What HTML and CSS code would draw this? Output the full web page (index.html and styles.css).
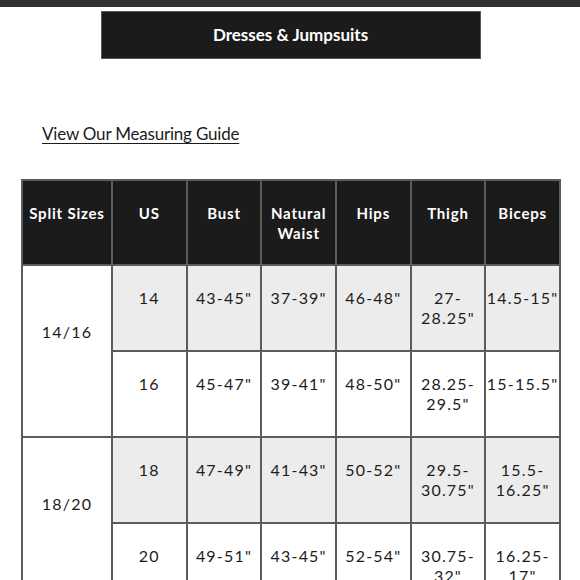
FILE: index.html
```html
<!DOCTYPE html>
<html>
<head>
<meta charset="utf-8">
<link rel="stylesheet" href="styles.css">
</head>
<body>
<div class="topbar"></div>
<div class="page">
  <div class="title">Dresses &amp; Jumpsuits</div>
  <a class="guide" href="#">View Our Measuring Guide</a>
  <table class="sizes">
    <colgroup>
      <col class="c-first"><col><col><col><col><col><col>
    </colgroup>
    <thead>
      <tr>
        <th>Split Sizes</th><th>US</th><th>Bust</th><th>Natural<br>Waist</th><th>Hips</th><th>Thigh</th><th>Biceps</th>
      </tr>
    </thead>
    <tbody>
      <tr class="grey">
        <td rowspan="2" class="split">14/16</td>
        <td>14</td><td>43-45"</td><td>37-39"</td><td>46-48"</td><td>27-<br>28.25"</td><td>14.5-15"</td>
      </tr>
      <tr>
        <td>16</td><td>45-47"</td><td>39-41"</td><td>48-50"</td><td>28.25-<br>29.5"</td><td>15-15.5"</td>
      </tr>
      <tr class="grey">
        <td rowspan="2" class="split">18/20</td>
        <td>18</td><td>47-49"</td><td>41-43"</td><td>50-52"</td><td>29.5-<br>30.75"</td><td>15.5-<br>16.25"</td>
      </tr>
      <tr>
        <td>20</td><td>49-51"</td><td>43-45"</td><td>52-54"</td><td>30.75-<br>32"</td><td>16.25-<br>17"</td>
      </tr>
    </tbody>
  </table>
</div>
</body>
</html>
```

FILE: styles.css
```css
html, body {
  margin: 0;
  padding: 0;
  background: #ffffff;
}
body {
  font-family: Lato, "Noto Sans", sans-serif;
  color: #1c1c1c;
}
.topbar {
  height: 7px;
  background: #2f3034;
}
.page {
  padding: 4px 20px 0 21px;
}
.title {
  width: 378px;
  height: 46px;
  margin: 0 auto;
  background: #1b1b1b;
  border: 1px solid #5a5a5a;
  color: #ffffff;
  font-size: 17px;
  font-weight: 700;
  line-height: 46px;
  text-align: center;
  letter-spacing: 0;
}
.guide {
  display: inline-block;
  margin: 64px 0 0 21px;
  font-size: 17px;
  line-height: 22px;
  letter-spacing: -0.2px;
  color: #1c1c1c;
  text-decoration: underline;
  text-underline-offset: 3px;
  text-decoration-thickness: 1px;
}
.sizes {
  margin-top: 34px;
  width: 540px;
  table-layout: fixed;
  border-collapse: collapse;
  border: 2px solid #5c5c5c;
}
.c-first { width: 90px; }
.sizes th, .sizes td {
  border: 2px solid #5c5c5c;
  vertical-align: top;
  text-align: center;
  padding: 22px 0 0 0;
  line-height: 20px;
  font-size: 16px;
  letter-spacing: 1.2px;
  white-space: nowrap;
}
.sizes th {
  background: #1b1b1b;
  color: #ffffff;
  font-weight: 700;
  letter-spacing: 0.8px;
  font-size: 15px;
  height: 85px;
  box-sizing: border-box;
}
.sizes td {
  height: 86px;
  box-sizing: border-box;
}
.sizes tr.grey td {
  background: #ececec;
}
.sizes tr.grey td.split {
  background: #ffffff;
  padding-top: 56px;
}
```
